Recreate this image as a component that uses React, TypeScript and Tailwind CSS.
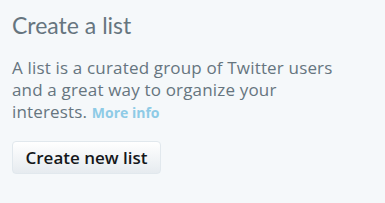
export default function App() {
  return (
    <div className="w-[385px] h-[203px] bg-[#f5f8fa] px-3 pt-[11px] flex flex-col items-start">
      <h2 className="font-['Lato','Open_Sans',sans-serif] text-[23px] leading-[28px] text-[#66757f] font-normal">
        Create a list
      </h2>
      <p className="mt-[18px] font-['Open_Sans','Lato',sans-serif] text-[17px] leading-[22px] tracking-[0.17px] text-[#66757f] whitespace-nowrap">
        A list is a curated group of Twitter users
        <br />
        and a great way to organize your
        <br />
        interests.{" "}
        <a className="text-[14px] font-bold tracking-normal text-[#8ecbe6]">More info</a>
      </p>
      <button className="mt-[17px] h-[33px] w-[149px] flex items-center justify-center rounded-[4px] border border-[#e1e8ed] bg-gradient-to-b from-white to-[#e6ebef] font-['Open_Sans','Lato',sans-serif] text-[17px] font-semibold text-[#14171a]">
        Create new list
      </button>
    </div>
  );
}
